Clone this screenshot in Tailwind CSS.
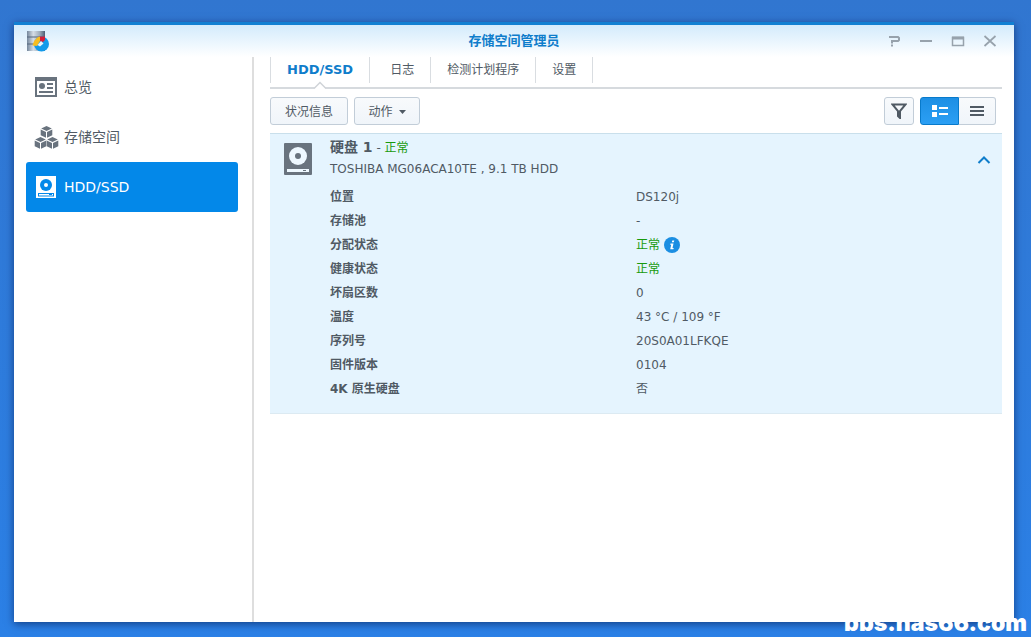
<!DOCTYPE html>
<html lang="zh-CN">
<head>
<meta charset="utf-8">
<meta name="viewport" content="width=device-width, initial-scale=1">
<title>存储空间管理员</title>
<script src="https://cdn.jsdelivr.net/npm/@tailwindcss/browser@4"></script>
</head>
<body class="relative flex h-screen overflow-hidden bg-linear-to-b from-[#3176d0] to-[#2b80e6] pt-[22px] pr-[17px] pb-[15px] pl-[14px] font-['DejaVu_Sans','Noto_Sans_CJK_SC',sans-serif] text-xs text-[#505a64]">
<div class="flex min-w-0 flex-1 flex-col border-t-3 border-[#1180d3] bg-white shadow-[0_2px_8px_rgba(0,20,70,0.6)]">
  <header class="grid h-8 shrink-0 grid-cols-3 items-center bg-linear-to-b from-[#d3ebfc] to-white pr-4 pl-3">
    <svg class="size-6" viewBox="0 0 24 24" aria-hidden="true">
      <defs><linearGradient id="metal"><stop stop-color="#75879c"/><stop offset=".35" stop-color="#d5dde6"/><stop offset=".7" stop-color="#9eacbb"/><stop offset="1" stop-color="#4c5e76"/></linearGradient></defs>
      <path d="M1 2h18v20H1z" fill="url(#metal)"/>
      <path d="M1 8h18M1 15h18" stroke="#55677d"/>
      <circle cx="15.500" cy="15" r="7.500" fill="#129aea"/>
      <path d="M13 12V7.500h6V11l-2 2z" fill="#d4203a"/>
      <path d="M6.500 16.500C8 11 11 8 14 7.500V12l-3 5z" fill="#f7bd20"/>
      <path d="m11.500 16 3.500-4 2.500 2.500-3.500 3z" fill="#e7f4fc"/>
    </svg>
    <h1 class="pl-1 text-center text-[13px] leading-5 font-bold text-[#0f7dcb]">存储空间管理员</h1>
    <div class="flex justify-end gap-4 text-[#97a2ac]">
      <button type="button" aria-label="帮助" class="size-4"><svg class="size-4" viewBox="0 0 16 16" fill="none" stroke="currentColor" stroke-width="2"><path d="M3 4h9l1 1v2l-1 1H6v2.500M5 12.500h2"/></svg></button>
      <button type="button" aria-label="最小化" class="size-4"><svg class="size-4" viewBox="0 0 16 16" fill="none" stroke="currentColor" stroke-width="2"><path d="M2 8h12"/></svg></button>
      <button type="button" aria-label="最大化" class="size-4"><svg class="size-4" viewBox="0 0 16 16" fill="none" stroke="currentColor"><path d="M2.500 4.500h11v8h-11z" stroke-width="1.500"/><path d="M2 5h12" stroke-width="3"/></svg></button>
      <button type="button" aria-label="关闭" class="size-4"><svg class="size-4" viewBox="0 0 16 16" fill="none" stroke="currentColor" stroke-width="1.700"><path d="m2.500 3 11 10m0-10-11 10"/></svg></button>
    </div>
  </header>

  <div class="flex min-h-0 flex-1">
    <nav class="w-60 shrink-0 border-r-2 border-[#dedede] pt-[5px] pr-[14px] pl-3 text-sm" aria-label="主菜单">
      <a href="#overview" class="flex h-[50px] items-center gap-1 pl-2">
        <svg class="h-6 w-[26px]" viewBox="0 0 26 24" aria-hidden="true"><path d="M1 2h22v20H1zM3 6v14h18V6z" fill="#69737e" fill-rule="evenodd"/><circle cx="8" cy="11" r="3" fill="#69737e"/><path d="M13 9h6M13 13h6M5 17h14" stroke="#69737e" stroke-width="2"/></svg>
        <span>总览</span>
      </a>
      <a href="#volume" class="flex h-[50px] items-center gap-1 pl-2">
        <svg class="h-6 w-[26px]" viewBox="0 0 26 24" aria-hidden="true">
          <defs><g id="cube"><path d="m0-6 5.300 2.500L0-1l-5.300-2.500zM-5.800-2.500-.5 0v5.800l-5.300-2.600zM5.800-2.500.5 0v5.800l5.300-2.600z"/></g></defs>
          <g fill="#69737e"><use href="#cube" x="12.500" y="7"/><use href="#cube" x="6.500" y="18"/><use href="#cube" x="18.500" y="18"/></g>
        </svg>
        <span>存储空间</span>
      </a>
      <a href="#hdd" aria-current="page" class="flex h-[50px] items-center gap-1 rounded-[3px] bg-[#0388e9] pl-2 text-white">
        <svg class="h-6 w-[26px]" viewBox="0 0 26 24" aria-hidden="true"><path d="M2 1h20v22H2z" fill="#fff"/><circle cx="12" cy="10" r="6" fill="#0388e9"/><circle cx="12" cy="10" r="2" fill="#fff"/><path d="M4 18h16v3.500H4z" fill="#0388e9"/><path d="M5 19h14v1.500H5z" fill="#fff"/><path d="M15 19.500h3" stroke="#0388e9"/></svg>
        <span>HDD/SSD</span>
      </a>
    </nav>

    <main class="min-w-0 flex-1 pr-3 pl-4">
      <div class="flex h-8 items-start border-b-2 border-[#d6dade]" role="tablist">
        <button type="button" role="tab" aria-selected="true" class="relative h-[26px] border-x border-[#d9dde1] px-4 text-[13px] font-bold text-[#0f7dcb]">HDD/SSD
          <svg class="absolute top-6 left-1/2 h-2 w-4 -translate-x-1/2" viewBox="0 0 16 8" aria-hidden="true"><path d="m2 8 6-6 6 6z" fill="#fff"/><path d="m2 7.500 6-6 6 6" fill="none" stroke="#d0d4d8" stroke-width="1.500"/></svg>
        </button>
        <button type="button" role="tab" class="h-[26px] border-r border-[#d9dde1] pr-4 pl-5">日志</button>
        <button type="button" role="tab" class="h-[26px] border-r border-[#d9dde1] px-4">检测计划程序</button>
        <button type="button" role="tab" class="h-[26px] border-r border-[#d9dde1] px-4">设置</button>
      </div>

      <div class="flex h-11 items-center justify-between pr-[6px]">
        <div class="flex gap-[6px]">
          <button type="button" class="h-7 w-[78px] rounded-[3px] border border-[#c2cdd8] bg-linear-to-b from-[#f8fafc] to-[#f0f5fa] pt-px">状况信息</button>
          <button type="button" class="flex h-7 w-[66px] items-center justify-center gap-[6px] rounded-[3px] border border-[#c2cdd8] bg-linear-to-b from-[#f8fafc] to-[#f0f5fa] pt-px">动作
            <svg class="h-1 w-[7px]" viewBox="0 0 7 4" fill="currentColor" aria-hidden="true"><path d="M0 0h7L3.500 4z"/></svg>
          </button>
        </div>
        <div class="flex gap-[6px]">
          <button type="button" aria-label="筛选" class="flex h-7 w-[30px] items-center justify-center rounded-[3px] border border-[#c2cdd8] bg-linear-to-b from-[#f8fafc] to-[#f0f5fa]">
            <svg class="size-4" viewBox="0 0 16 16" fill="none" stroke="#505a64" stroke-width="2"><path d="M1.500 1.500h13L9 8v7L7 13V8z"/></svg>
          </button>
          <div class="flex">
            <button type="button" aria-label="详细视图" aria-pressed="true" class="flex h-7 w-[39px] items-center justify-center rounded-l-[3px] border border-[#087acb] bg-linear-to-b from-[#1d8fe4] to-[#2b9ff4]">
              <svg class="h-3 w-4" viewBox="0 0 16 12" fill="#fff"><path d="M0 0h5v5H0zM0 7h5v5H0zM7 2h9v2H7zM7 8h9v2H7z"/></svg>
            </button>
            <button type="button" aria-label="列表视图" class="flex h-7 w-[37px] items-center justify-center rounded-r-[3px] border border-l-0 border-[#c2cdd8] bg-linear-to-b from-[#f8fafc] to-[#f0f5fa]">
              <svg class="h-[10px] w-[14px]" viewBox="0 0 14 10" fill="#505a64"><path d="M0 0h14v2H0zM0 4h14v2H0zM0 8h14v2H0z"/></svg>
            </button>
          </div>
        </div>
      </div>

      <section class="border-y border-y-[#c9dfeb] border-b-[#dceaf2] bg-[#e5f4fe] pb-3">
        <div class="flex h-[51px] items-start pr-[11px] pl-[14px]">
          <svg class="mt-[9px] mr-[18px] h-8 w-7 shrink-0" viewBox="0 0 28 32" aria-hidden="true"><rect width="28" height="32" rx="1" fill="#69737e"/><circle cx="14" cy="13" r="9" fill="#eef8ff"/><circle cx="14" cy="13" r="3" fill="#69737e"/><path d="M3 26h22v3H3z" fill="#eef8ff"/><path d="M19 27.500h3" stroke="#69737e"/></svg>
          <div class="flex-1 pt-[3px]">
            <h2 class="leading-[22px]"><span class="text-sm font-bold">硬盘 1</span> - <span class="text-[#189a0c]">正常</span></h2>
            <p class="leading-5">TOSHIBA MG06ACA10TE , 9.1 TB HDD</p>
          </div>
          <button type="button" aria-label="收起" class="mt-5 h-3 w-[14px]"><svg class="h-3 w-[14px]" viewBox="0 0 14 12" fill="none" stroke="#0f7dcb" stroke-width="2"><path d="m1.500 9 5.500-5.500L12.500 9"/></svg></button>
        </div>
        <table class="w-full table-fixed text-left leading-6">
          <tbody>
            <tr><th scope="row" class="w-[366px] pl-[60px]">位置</th><td>DS120j</td></tr>
            <tr><th scope="row" class="pl-[60px]">存储池</th><td>-</td></tr>
            <tr><th scope="row" class="pl-[60px]">分配状态</th><td class="text-[#189a0c]"><div class="flex items-center gap-1">正常
              <svg class="size-4" viewBox="0 0 16 16" role="img" aria-label="信息"><circle cx="8" cy="8" r="8" fill="#1b8ee2"/><path d="M8.300 3.500h2l-.5 1.700h-2zM6.500 6.500h3L8.500 11h1.200l-.3 1.300H6.200L7.200 7.800h-1z" fill="#fff"/></svg></div></td></tr>
            <tr><th scope="row" class="pl-[60px]">健康状态</th><td class="text-[#189a0c]">正常</td></tr>
            <tr><th scope="row" class="pl-[60px]">坏扇区数</th><td>0</td></tr>
            <tr><th scope="row" class="pl-[60px]">温度</th><td>43 °C / 109 °F</td></tr>
            <tr><th scope="row" class="pl-[60px]">序列号</th><td>20S0A01LFKQE</td></tr>
            <tr><th scope="row" class="pl-[60px]">固件版本</th><td>0104</td></tr>
            <tr><th scope="row" class="pl-[60px]">4K 原生硬盘</th><td>否</td></tr>
          </tbody>
        </table>
      </section>
    </main>
  </div>
</div>
<div class="absolute right-1 bottom-0 font-['Inter',sans-serif] text-[23px] leading-7 font-black text-white">bbs.nas66.com</div>
</body>
</html>
